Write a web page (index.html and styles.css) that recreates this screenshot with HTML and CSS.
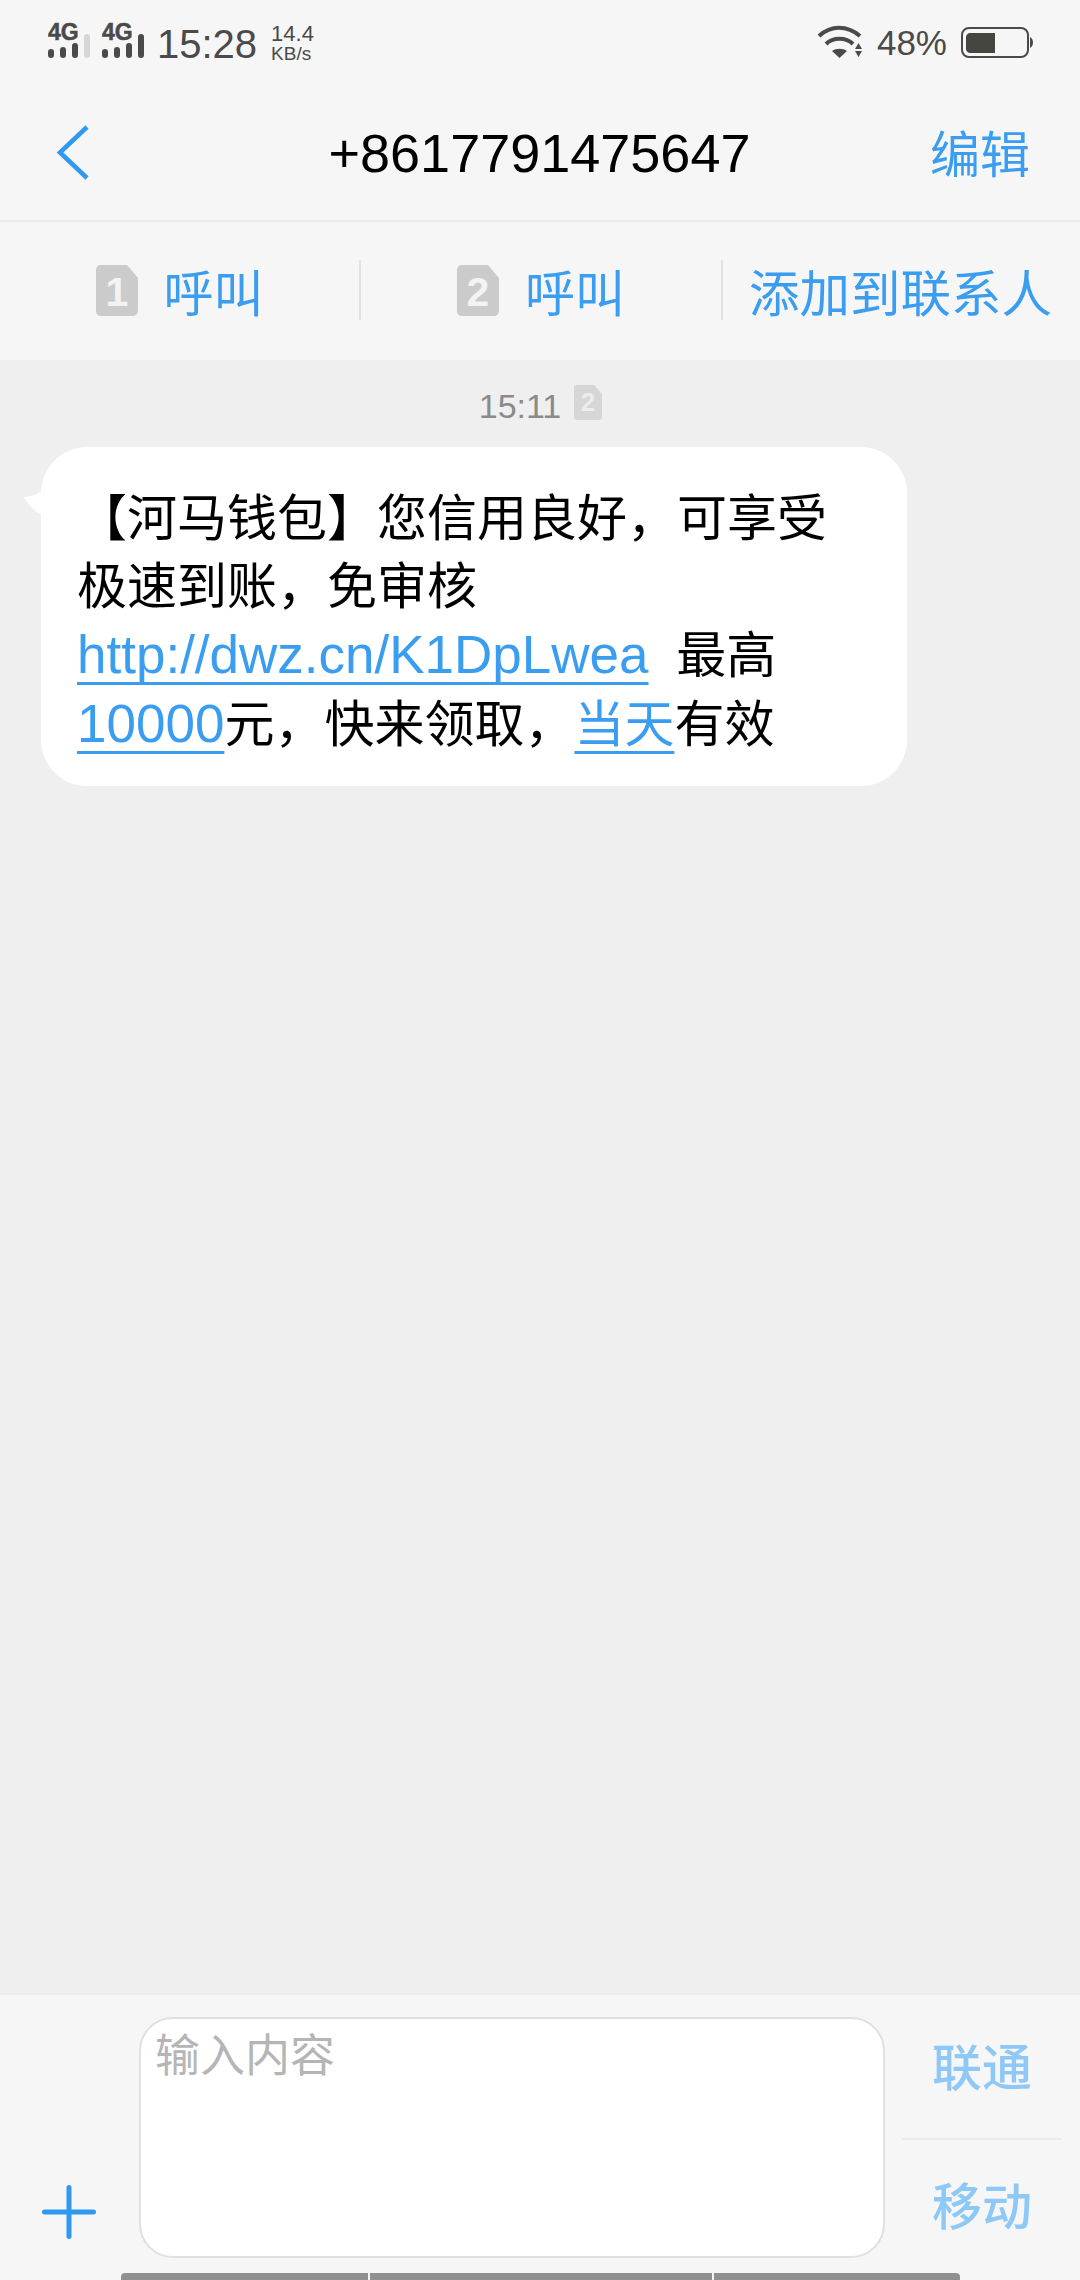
FILE: index.html
```html
<!DOCTYPE html>
<html lang="zh-CN">
<head>
  <meta charset="utf-8">
  <title>+8617791475647</title>
  <link rel="stylesheet" href="styles.css">
</head>
<body>
  <div class="status-bar">
    <div class="status-left">
      <svg class="signal" width="48" height="46" viewBox="0 0 48 46">
        <text class="signal-label" x="0" y="23">4G</text>
        <rect class="bar" x="0" y="32" width="6" height="9" rx="3"/>
        <rect class="bar" x="12" y="30" width="6" height="11" rx="3"/>
        <rect class="bar" x="24" y="26" width="6" height="15" rx="3"/>
        <rect class="bar bar-off" x="36" y="17" width="6" height="24" rx="3"/>
      </svg>
      <svg class="signal" width="48" height="46" viewBox="0 0 48 46">
        <text class="signal-label" x="0" y="23">4G</text>
        <rect class="bar" x="0" y="32" width="6" height="9" rx="3"/>
        <rect class="bar" x="12" y="30" width="6" height="11" rx="3"/>
        <rect class="bar" x="24" y="26" width="6" height="15" rx="3"/>
        <rect class="bar" x="36" y="17" width="6" height="24" rx="3"/>
      </svg>
      <span class="clock">15:28</span>
      <div class="speed">
        <span>14.4</span>
        <span class="speed-unit">KB/s</span>
      </div>
    </div>
    <div class="status-right">
      <svg class="wifi" width="46" height="34" viewBox="0 0 46 34">
        <path d="M2 11C14 0 30 0 43 11" fill="none" stroke="#4a4a4a" stroke-width="4"/>
        <path d="M9 19C16 12 29 12 36 19" fill="none" stroke="#4a4a4a" stroke-width="4"/>
        <path d="M15 26C19 23 26 23 30 26L22.500 33Z" fill="#4a4a4a"/>
        <path d="M41.500 18L45 24H38ZM38 26H45L41.500 32Z" fill="#4a4a4a"/>
      </svg>
      <span class="battery-text">48%</span>
      <svg class="battery" width="72" height="32" viewBox="0 0 72 32">
        <rect x="1" y="1" width="66" height="29" rx="7" fill="none" stroke="#4a4a4a" stroke-width="2"/>
        <path d="M9 6H34V26H9C7 26 5 24 5 22V10C5 8 7 6 9 6Z" fill="#45463f"/>
        <path d="M69 10C71 11 72 13 72 15.500C72 18 71 20 69 21Z" fill="#4a4a4a"/>
      </svg>
    </div>
  </div>

  <header class="nav">
    <svg class="back" width="35" height="57" viewBox="0 0 35 57">
      <path d="M32 3L5 28.500L32 54" fill="none" stroke="#2f98f1" stroke-width="4.500"/>
    </svg>
    <h1 class="title">+8617791475647</h1>
    <a class="edit">编辑</a>
  </header>

  <div class="actions">
    <div class="action">
      <svg class="sim" width="42" height="51" viewBox="0 0 42 51">
        <path d="M5 0H31L42 13V46C42 49 39 51 37 51H5C2 51 0 49 0 46V5C0 2 2 0 5 0Z" fill="#cbcbcb"/>
        <text class="sim-num" x="21" y="41">1</text>
      </svg>
      <span>呼叫</span>
    </div>
    <div class="action">
      <svg class="sim" width="42" height="51" viewBox="0 0 42 51">
        <path d="M5 0H31L42 13V46C42 49 39 51 37 51H5C2 51 0 49 0 46V5C0 2 2 0 5 0Z" fill="#cbcbcb"/>
        <text class="sim-num" x="21" y="41">2</text>
      </svg>
      <span>呼叫</span>
    </div>
    <div class="action action-wide">
      <span>添加到联系人</span>
    </div>
  </div>

  <main class="thread">
    <div class="stamp">
      <span>15:11</span>
      <svg width="28" height="35" viewBox="0 0 28 35">
        <path d="M3 0H20L28 9V32C28 34 27 35 25 35H3C1 35 0 34 0 32V3C0 1 1 0 3 0Z" fill="#d6d6d6"/>
        <text class="stamp-num" x="14" y="26">2</text>
      </svg>
    </div>
    <div class="bubble">
      <svg class="tail" width="20" height="26" viewBox="0 0 20 26">
        <path d="M0 8C7 8 14 5 20 0V26C12 24 5 17 0 8Z" fill="#fff"/>
      </svg>
      【河马钱包】您信用良好，可享受极速到账，免审核 <a class="link link-latin">http://dwz.cn/K1DpLwea</a>&nbsp;&nbsp;最高 <a class="link link-latin">10000</a>元，快来领取，<a class="link">当天</a>有效
    </div>
  </main>

  <footer class="composer">
    <div class="composer-row">
      <div class="plus-col">
        <svg width="56" height="56" viewBox="0 0 56 56">
          <path d="M28 3.500V52.500M3.500 28H52.500" fill="none" stroke="#2f98f1" stroke-width="5" stroke-linecap="round"/>
        </svg>
      </div>
      <div class="input">输入内容</div>
      <div class="send-col">
        <div class="send send-top">联通</div>
        <div class="send send-bottom">移动</div>
      </div>
    </div>
    <div class="home-bar">
      <span></span>
      <span></span>
      <span></span>
    </div>
  </footer>
</body>
</html>
```

FILE: styles.css
```css
* {
  box-sizing: border-box;
}
body {
  margin: 0;
  width: 1080px;
  height: 2280px;
  display: flex;
  flex-direction: column;
  background: #efefef;
  font-family: "Liberation Sans", "Noto Sans CJK SC", sans-serif;
  overflow: hidden;
}

/* status bar */
.status-bar {
  height: 85px;
  padding: 0 47px 0 48px;
  display: flex;
  justify-content: space-between;
  background: #f6f6f6;
  color: #4a4a4a;
}
.status-left {
  display: flex;
  padding-top: 17px;
}
.signal {
  margin-right: 6px;
}
.signal-label {
  font-size: 23px;
  font-weight: bold;
  fill: #4a4a4a;
  stroke: #4a4a4a;
  stroke-width: 0.5px;
}
.bar {
  fill: #4a4a4a;
}
.bar-off {
  fill: #d6d6d6;
}
.clock {
  margin: 7px 0 0 1px;
  font-size: 40px;
  line-height: 40px;
}
.speed {
  margin: 7px 0 0 14px;
  display: flex;
  flex-direction: column;
  font-size: 22px;
  line-height: 20px;
}
.speed-unit {
  font-size: 19px;
  line-height: 19px;
}
.status-right {
  display: flex;
  padding-top: 25px;
}
.battery-text {
  margin: 0 14px;
  font-size: 35px;
  line-height: 36px;
}
.battery {
  margin-top: 2px;
}

/* nav */
.nav {
  height: 137px;
  padding: 0 50px 0 49px;
  display: grid;
  grid-template-columns: 1fr auto 1fr;
  align-items: center;
  background: #f6f6f6;
  border-bottom: 2px solid #ececec;
}
.back {
  margin-left: 6px;
}
.title {
  margin: 0;
  font-size: 54px;
  font-weight: normal;
  color: #000;
}
.edit {
  justify-self: end;
  margin-bottom: 3px;
  font-size: 50px;
  color: #3a9df0;
}

/* call actions */
.actions {
  height: 138px;
  padding-bottom: 2px;
  display: grid;
  grid-template-columns: 359px 362px 359px;
  align-items: center;
  background: #f6f6f6;
  font-size: 50px;
  color: #3a9df0;
}
.action {
  height: 60px;
  display: flex;
  justify-content: center;
  align-items: center;
  gap: 26px;
  border-left: 2px solid #e2e2e2;
}
.action:first-child {
  border-left: 0;
}
.action-wide {
  padding-right: 2px;
  font-size: 50.500px;
}
.sim-num {
  font-size: 41px;
  font-weight: bold;
  text-anchor: middle;
  fill: #f3f3f3;
}

/* messages */
.thread {
  flex: 1;
  padding: 25px 0 0 41px;
}
.stamp {
  width: 998px;
  height: 62px;
  padding-left: 1px;
  display: flex;
  justify-content: center;
  gap: 13px;
  font-size: 34px;
  line-height: 42px;
  color: #8a8a8a;
}
.stamp-num {
  font-size: 26px;
  font-weight: bold;
  text-anchor: middle;
  fill: #ececec;
}
.bubble {
  position: relative;
  width: 866px;
  padding: 38px 46px 27px 36px;
  background: #fff;
  border-radius: 46px;
  font-size: 50px;
  line-height: 68px;
  color: #000;
}
.tail {
  position: absolute;
  left: -17px;
  top: 42px;
}
.link {
  color: #3a9df0;
  text-decoration: underline 3px;
  text-decoration-skip-ink: none;
  text-underline-offset: 9px;
}
.link-latin {
  font-size: 53px;
}

/* composer */
.composer {
  height: 287px;
  padding-top: 22px;
  background: #f6f6f6;
  border-top: 2px solid #ececec;
}
.composer-row {
  height: 241px;
  display: flex;
}
.plus-col {
  width: 139px;
  padding: 167px 0 0 41px;
}
.input {
  width: 746px;
  padding: 10px 14px;
  background: #fff;
  border: 2px solid #e0e0e0;
  border-radius: 34px;
  font-size: 45px;
  line-height: 56px;
  color: #b5b5b5;
}
.send-col {
  width: 160px;
  margin-left: 17px;
  display: flex;
  flex-direction: column;
}
.send {
  display: flex;
  align-items: center;
  justify-content: center;
  font-size: 50px;
  font-weight: 500;
  color: #8ec8f6;
}
.send-top {
  height: 121px;
  padding-bottom: 28px;
}
.send-bottom {
  height: 120px;
  padding-top: 7px;
  border-top: 2px solid #ececec;
}
.home-bar {
  margin: 15px 0 0 121px;
  width: 839px;
  height: 7px;
  display: flex;
  gap: 2px;
}
.home-bar span {
  flex: 1;
  background: #909090;
}
.home-bar span:first-child {
  flex: 0 0 247px;
  border-radius: 4px 0 0 0;
}
.home-bar span:last-child {
  flex: 0 0 246px;
  border-radius: 0 4px 0 0;
}
```
